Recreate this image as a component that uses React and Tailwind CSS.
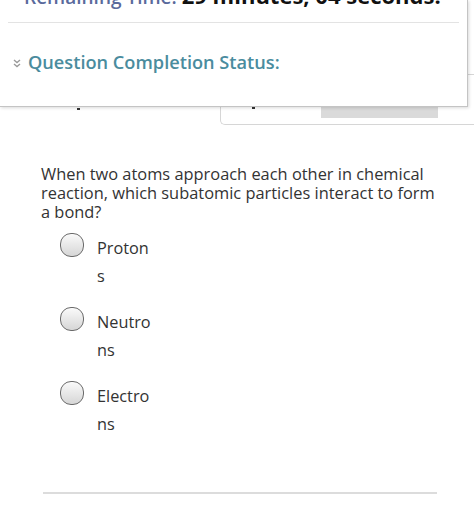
import React from "react";

const font = { fontFamily: '"Open Sans", "Noto Sans", sans-serif' };

function Radio({ label }) {
  return (
    <div className="flex items-start">
      <div className="w-[24px] h-[24px] rounded-[11px] border-[1.5px] border-[#6a6a6a] bg-gradient-to-b from-[#fafafa] to-[#d6d6d6] mt-[-1px]" />
      <div className="ml-[13px] w-[56px] break-all text-[16.3px] leading-[28px] text-[#333]">
        {label}
      </div>
    </div>
  );
}

export default function App() {
  return (
    <div className="relative w-[474px] h-[520px] bg-white overflow-hidden" style={font}>
      {/* overlay panel */}
      <div className="absolute top-0 left-0 z-10 w-[468px] h-[107px] bg-white border-r-[1.5px] border-b-[1.5px] border-[#c4c4c4] shadow-[1px_1px_3px_rgba(0,0,0,0.15)]">
        <div className="mt-[-18px] pl-[24px] h-[27px] leading-[27px] whitespace-nowrap flex items-baseline">
          <span className="text-[19px] font-semibold text-[#5a6a9c]">Remaining Time:</span>
          <span className="ml-[5px] text-[22px] font-bold text-[#111]">29 minutes, 04 seconds.</span>
        </div>
        <div className="mx-[8px] mt-[13px] h-px bg-[#e3e3e3]" />
        <div className="flex items-center pl-[13px] mt-[28px]">
          <svg width="8" height="9" viewBox="0 0 8 9" className="mt-[2px]">
            <path d="M1 1 L4 3.5 L7 1 M1 5 L4 7.5 L7 5" fill="none" stroke="#9a9a9a" strokeWidth="1.4" />
          </svg>
          <span className="ml-[7px] text-[18.2px] leading-[23px] font-semibold text-[#4a8c9e]">
            Question Completion Status:
          </span>
        </div>
      </div>

      {/* page content */}
      <div className="pt-[74px]">
        <div className="flex">
          <div className="w-[220px] flex flex-col items-start">
            <div className="mt-[34px] ml-[77px] w-[3px] h-[2px] bg-[#333]" />
          </div>
          <div className="flex-1 h-[51px] border-t border-l border-b border-[#d6d6d6] rounded-bl-[5px]">
            <div className="flex items-start">
              <div className="mt-[32px] ml-[31px] w-[3px] h-[2px] bg-[#333]" />
              <div className="mt-[32px] ml-[66px] w-[117px] h-[11px] bg-[#dadada]" />
            </div>
          </div>
        </div>

        <div className="ml-[41px] mt-[39px] w-[398px] text-[16.4px] leading-[19px] text-[#333]">
          When two atoms approach each other in chemical reaction, which subatomic particles interact to form a bond?
        </div>

        <div className="ml-[60px] mt-[13px] flex flex-col gap-[18px]">
          <Radio label="Protons" />
          <Radio label="Neutrons" />
          <Radio label="Electrons" />
        </div>

        <div className="ml-[43px] mt-[54px] w-[394px] h-[2px] bg-[#dcdcdc]" />
      </div>
    </div>
  );
}
